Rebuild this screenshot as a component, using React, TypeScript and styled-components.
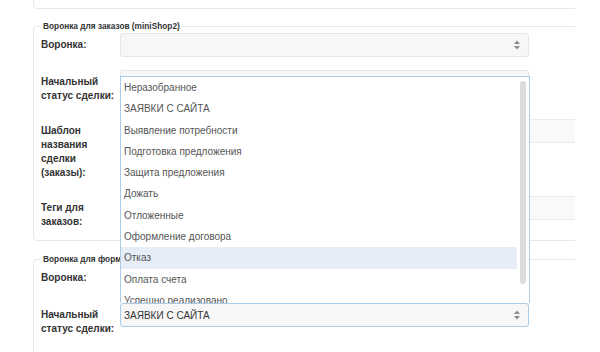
import styled, { createGlobalStyle } from 'styled-components';

const GlobalStyle = createGlobalStyle`
body {
  margin: 0;
  background: #fff;
  font-family: "Liberation Sans", Arial, sans-serif;
}
`

const Page = styled.div`
margin-left: 33px;
width: 542px;
`

const PrevFieldset = styled.div`
height: 8px;
border-left: 1px solid #e8e8e8;
border-bottom: 1px solid #e8e8e8;
border-bottom-left-radius: 4px;
`

const Fieldset = styled.fieldset<{ $gap: number }>`
margin: ${p => p.$gap}px 0 0;
padding: 1px 0 8px 7px;
border: 1px solid #e8e8e8;
border-right: none;
border-radius: 4px 0 0 4px;
min-width: 0;
display: flex;
flex-direction: column;
gap: 13px;
`

const Legend = styled.legend`
margin-left: -1px;
padding: 0 3px;
font-size: 8.3px;
line-height: 12px;
font-weight: bold;
color: #333;
`

const Row = styled.div`
display: grid;
grid-template-columns: 79px 1fr;
align-items: start;
`

const Label = styled.label`
padding: 5px 0 3px 0;
font-size: 10px;
line-height: 14px;
font-weight: bold;
color: #333;
`

const SelectWrap = styled.div`
position: relative;
width: 409px;
`

const SelectBox = styled.div<{ $focused?: boolean }>`
box-sizing: border-box;
height: 24px;
display: flex;
align-items: center;
justify-content: space-between;
padding: 0 8px 0 3px;
background: #f7f7f7;
border: 1px solid ${p => (p.$focused ? '#a9cce9' : '#e6e6e6')};
border-radius: 3px;
font-size: 10px;
color: #333;
`

const TextInput = styled.div`
box-sizing: border-box;
height: 24px;
background: #f9f9f9;
border: 1px solid #ececec;
border-right: none;
border-radius: 3px 0 0 3px;
`

const Listbox = styled.div`
position: absolute;
left: 0;
bottom: 100%;
box-sizing: border-box;
width: 410px;
height: 227px;
display: flex;
background: #fff;
border: 1px solid #a9cce9;
border-bottom: none;
overflow: hidden;
`

const Options = styled.ul`
flex: 1;
margin: 0;
padding: 0;
list-style: none;
`

const Option = styled.li<{ $active?: boolean }>`
height: 21.3px;
line-height: 21.3px;
padding-left: 3px;
font-size: 10px;
color: #555;
white-space: nowrap;
background: ${p => (p.$active ? '#e6edf6' : 'transparent')};
`

const ScrollTrack = styled.div`
width: 12px;
padding: 4px 3px 0;
box-sizing: border-box;
`

const Thumb = styled.div`
width: 6px;
height: 203px;
border-radius: 3px;
background: #dcdcdc;
`

const options = [
  'Неразобранное',
  'ЗАЯВКИ С САЙТА',
  'Выявление потребности',
  'Подготовка предложения',
  'Защита предложения',
  'Дожать',
  'Отложенные',
  'Оформление договора',
  'Отказ',
  'Оплата счета',
  'Успешно реализовано',
];

function Arrows(): JSX.Element {
  return (
    <svg width="6" height="10" viewBox="0 0 6 10">
      <path d="M0 4 L3 0.5 L6 4 Z" fill="#8a8a8a" />
      <path d="M0 6 L3 9.5 L6 6 Z" fill="#8a8a8a" />
    </svg>
  );
}

function Select({ value, focused, open }: { value?: string; focused?: boolean; open?: boolean }): JSX.Element {
  return (
    <SelectWrap>
      {open && (
        <Listbox>
          <Options>
            {options.map(o => (
              <Option key={o} $active={o === 'Отказ'}>{o}</Option>
            ))}
          </Options>
          <ScrollTrack><Thumb /></ScrollTrack>
        </Listbox>
      )}
      <SelectBox $focused={focused}>
        <span>{value}</span>
        <Arrows />
      </SelectBox>
    </SelectWrap>
  );
}

export default function App(): JSX.Element {
  return (
    <Page>
      <GlobalStyle />
      <PrevFieldset />

      <Fieldset $gap={11}>
        <Legend>Воронка для заказов (miniShop2)</Legend>
        <Row>
          <Label>Воронка:</Label>
          <Select />
        </Row>
        <Row>
          <Label>Начальный статус сделки:</Label>
          <Select />
        </Row>
        <Row>
          <Label>Шаблон названия сделки (заказы):</Label>
          <TextInput />
        </Row>
        <Row>
          <Label>Теги для заказов:</Label>
          <TextInput />
        </Row>
      </Fieldset>

      <Fieldset $gap={12}>
        <Legend>Воронка для форм (FormIt)</Legend>
        <Row>
          <Label>Воронка:</Label>
          <Select />
        </Row>
        <Row>
          <Label>Начальный статус сделки:</Label>
          <Select value="ЗАЯВКИ С САЙТА" focused open />
        </Row>
        <Row>
          <Label>Шаблон названия сделки (формы):</Label>
          <TextInput />
        </Row>
      </Fieldset>
    </Page>
  );
}
